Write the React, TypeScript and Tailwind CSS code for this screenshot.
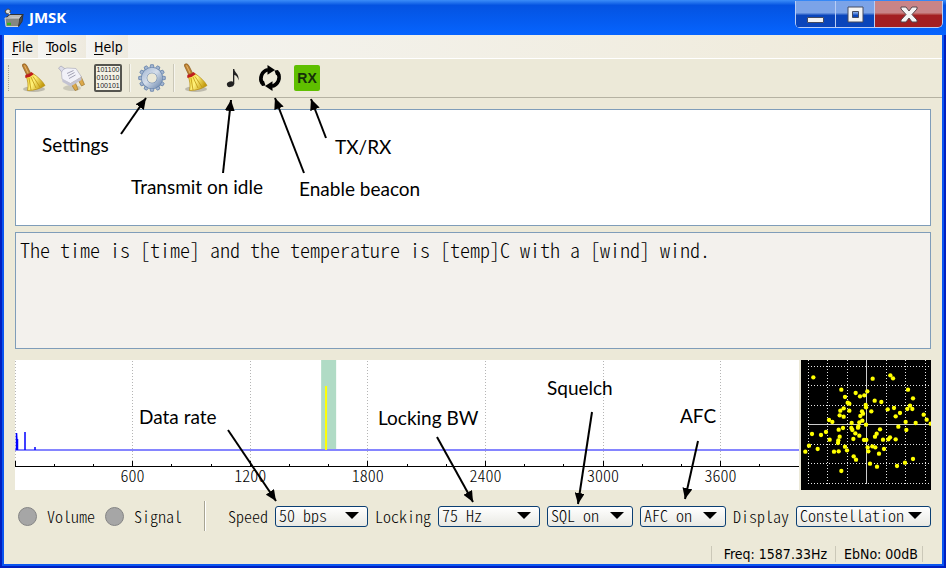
import React from "react";

const MONO = "font-['Noto_Sans_CJK_SC','Liberation_Mono',monospace] font-light [font-feature-settings:'hwid']";
const UI = "font-['DejaVu_Sans_Condensed','Noto_Sans',sans-serif]";

/* Constellation samples, in a 390 x 390 field that starts at (33, 30). */
const SAMPLES: [number, number][] = [
  [70, 82], [248, 86], [301, 76], [309, 85], [154, 119], [354, 119], [197, 129], [232, 124],
  [210, 139], [223, 136], [165, 141], [369, 145], [254, 152], [274, 156], [173, 158], [178, 161],
  [227, 165], [228, 172], [360, 167], [352, 177], [367, 177], [161, 175], [151, 182], [178, 182],
  [293, 178], [312, 174], [244, 184], [216, 184], [219, 191], [330, 189], [317, 199], [149, 196],
  [161, 200], [211, 198], [401, 194], [410, 209], [117, 210], [127, 216], [217, 212], [208, 217],
  [185, 219], [347, 216], [377, 219], [422, 221], [228, 224], [205, 229], [184, 234], [204, 233],
  [187, 240], [159, 234], [146, 239], [325, 230], [349, 240], [270, 238], [108, 246], [66, 252],
  [93, 255], [196, 250], [260, 251], [255, 260], [208, 257], [149, 260], [119, 269], [190, 267],
  [145, 271], [144, 279], [222, 270], [229, 270], [279, 269], [295, 268], [300, 262], [317, 268],
  [57, 287], [83, 297], [46, 305], [165, 290], [171, 301], [132, 305], [146, 304], [233, 292],
  [247, 289], [256, 292], [235, 304], [282, 297], [267, 311], [191, 319], [198, 329], [240, 341],
  [261, 350], [345, 338], [321, 348], [369, 327], [154, 363],
];

function Broom() {
  return (
    <svg viewBox="0 0 28 30" className="h-[30px] w-7" aria-hidden="true">
      <defs>
        <linearGradient id="straw" x1="0" x2="1" y1="0" y2="0.4">
          <stop offset="0" stopColor="#f1d52f" />
          <stop offset="0.5" stopColor="#fff17a" />
          <stop offset="1" stopColor="#c49b0e" />
        </linearGradient>
      </defs>
      <ellipse cx="14" cy="26" rx="11" ry="3" fill="#8d8b82" opacity="0.5" />
      <path d="M2.5 3 Q2 .8 4.2 .8 Q6 .8 7 3 L10.5 10 L6.8 12 Z" fill="#c08434" stroke="#885414" strokeWidth=".7" />
      <path d="M4.5 2.5 L8 10" stroke="#e5b56c" strokeWidth="1" />
      <path d="M6 13 L13 10.5 C18 14 22.5 18 25 22.5 C20 25.5 15 27.5 7.5 27.5 C8.5 22 8 18 6 13Z" fill="url(#straw)" stroke="#b48b0e" strokeWidth=".7" />
      <path d="M9 15 L11 27 M11 14 L16 25 M13 13.5 L20 24" stroke="#bd9412" strokeWidth=".8" fill="none" />
      <path d="M5.3 13.2 Q9 13.5 12.7 10.2" stroke="#c01d1d" strokeWidth="3" fill="none" />
    </svg>
  );
}

function Plug() {
  return (
    <svg viewBox="0 0 28 30" className="h-[30px] w-7" aria-hidden="true">
      <ellipse cx="15" cy="25" rx="9" ry="3" fill="#8d8b82" opacity="0.35" />
      <path d="M13 19 L18 27.500 L21 26.500 L17.500 17.500Z M20 15 L24.500 23 L27.500 21.500 L24 13.500Z" fill="#dda94a" stroke="#9b762f" strokeWidth=".7" />
      <path d="M1.500 5 L4 3 L9 6.500 L5.500 10Z" fill="#dcdce8" stroke="#a5a5b5" strokeWidth=".7" />
      <path d="M4.500 10 Q5 6 10 5 L19 5.500 L24.500 14 L13.500 20.500 L5 16Z" fill="#f1f1f8" stroke="#a5a5b5" strokeWidth=".6" />
      <path d="M5 16 L13.500 20.500 L24.500 14 L24.500 17 L13.500 23.500 L5.500 19Z" fill="#c3c3d2" />
      <path d="M10 10.500 L16.500 7.500 M11 13 L17.500 9.500 M12 15.500 L18.500 12" stroke="#a2a2b4" strokeWidth="1" />
    </svg>
  );
}

function Binary() {
  return (
    <span className="flex size-7 flex-col items-center justify-center rounded-[2px] border-2 border-[#55554f] bg-[#f4f2e6] font-['Liberation_Sans',sans-serif] text-[7px] leading-[8px] text-[#22221e]">
      <span>101100</span>
      <span>010110</span>
      <span>100101</span>
    </span>
  );
}

function Gear() {
  const teeth = Array.from({ length: 12 }, (_, i) => i * 30);
  return (
    <svg viewBox="0 0 28 28" className="size-7" aria-hidden="true">
      <defs>
        <linearGradient id="steel" x1="0" x2="1" y1="0" y2="1">
          <stop offset="0" stopColor="#aebfd8" />
          <stop offset="0.45" stopColor="#d5deea" />
          <stop offset="1" stopColor="#7d96b8" />
        </linearGradient>
      </defs>
      {teeth.map((a) => (
        <path key={a} d="M11.8 4.5 L12.6 .7 H15.4 L16.2 4.5Z" fill="#a4b6d0" stroke="#6582ab" strokeWidth=".8" transform={`rotate(${a} 14 14)`} />
      ))}
      <circle cx="14" cy="14" r="7.8" fill="none" stroke="#6582ab" strokeWidth="6" />
      <circle cx="14" cy="14" r="7.8" fill="none" stroke="url(#steel)" strokeWidth="5" />
    </svg>
  );
}

function Note() {
  return (
    <svg viewBox="0 0 28 28" className="size-7" aria-hidden="true">
      <ellipse cx="11.5" cy="20.2" rx="3.7" ry="2.8" fill="#222" transform="rotate(-18 11.5 20.2)" />
      <path d="M14 20 V5 H15.3 C15.6 9 20.5 10 19.5 16.5 C18.8 13 17.5 11.6 15.3 11 V20Z" fill="#222" />
    </svg>
  );
}

function Cycle() {
  return (
    <svg viewBox="0 0 28 28" className="size-7" aria-hidden="true">
      <path d="M6.4 19.6 A9 9 0 0 1 12 5.8" fill="none" stroke="#000" strokeWidth="3.6" />
      <path d="M11.5 1 L19 6 L11.5 10.8Z" />
      <path d="M21.6 8.4 A9 9 0 0 1 16 22.2" fill="none" stroke="#000" strokeWidth="3.6" />
      <path d="M16.5 17.2 L9 22 L16.5 27Z" />
      <path d="M3.5 17.5 L8 17 L9.5 21.5 L6 22Z M24.5 10.5 L20 11 L18.5 6.5 L22 6Z" />
    </svg>
  );
}

function AppIcon() {
  return (
    <svg viewBox="0 0 20 20" className="size-5" aria-hidden="true">
      <path d="M1 3 L4 .8 L6.5 2.5 L5.5 5.5 L2.5 6Z" fill="#ddd" stroke="#444" />
      <path d="M5 5 L7.5 9" stroke="#eee" strokeWidth="1.5" />
      <path d="M1.500 10 L6 6.500 H19 L15.500 11Z" fill="#b9bab6" stroke="#333" />
      <path d="M1 10 H15.500 L14.500 18.500 H2Z" fill="#858781" stroke="#d5d5d5" />
      <path d="M15.500 11 L19 6.500 L18 13.500 L14.500 18.500Z" fill="#4b4c4a" stroke="#333" />
      <path d="M3 16 h4" stroke="#35b21f" strokeWidth="2.5" />
    </svg>
  );
}

function ToolButton({ label, children }: { label: string; children: React.ReactNode }) {
  return (
    <button type="button" aria-label={label} className="flex size-7 items-center justify-center">
      {children}
    </button>
  );
}

function Separator() {
  return <span className="h-7 w-[2px] border-l border-[#cbc8b8] bg-[#f6f5ee]" />;
}

function MenuItem({ text, className }: { text: string; className: string }) {
  return (
    <button type="button" className={`h-full bg-linear-to-r from-[#f5f5f3] to-[#eeeade] pl-2 text-left ${className}`}>
      <span className="underline underline-offset-2">{text[0]}</span>
      {text.slice(1)}
    </button>
  );
}

function Picker({ id, label, options, className }: { id: string; label?: string; options: string[]; className: string }) {
  return (
    <span className={`relative flex h-[21px] ${className}`}>
      <select
        id={id}
        aria-label={label}
        className={`w-full appearance-none rounded-[3px] border border-[#0b3f73] bg-linear-to-b from-white to-[#e9e9e3] pb-[2px] pl-[3px] leading-[17px] text-black ${MONO}`}
      >
        {options.map((o) => (
          <option key={o}>{o}</option>
        ))}
      </select>
      <svg viewBox="0 0 14 7" className="pointer-events-none absolute top-[6px] right-[9px] h-[7px] w-[14px]" aria-hidden="true">
        <path d="M0 0 H14 L7 7Z" />
      </svg>
    </span>
  );
}

function Lamp() {
  return <span className="size-[19px] shrink-0 rounded-full border border-[#858585] bg-[#a6a6a6]" />;
}

function Spectrum() {
  const pct = (hz: number) => `${hz / 40}%`;
  const minor = Array.from({ length: 21 }, (_, i) => i * 200);
  const major = [0, 600, 1200, 1800, 2400, 3000, 3600];
  return (
    <svg className={`h-[130px] min-w-0 flex-1 bg-white text-base ${MONO}`} role="img" aria-label="Spectrum">
      {major.map((f) => (
        <line key={f} x1={pct(f)} x2={pct(f)} y1="1" y2="101" stroke="#b5b5b5" strokeDasharray="1 2" shapeRendering="crispEdges" />
      ))}
      <rect x={pct(1562)} y="0" width="15" height="90" fill="#b0dbc5" />
      <line x1="0" x2="100%" y1="90" y2="90" stroke="#8585ff" strokeWidth="2" />
      <path d="M1.5 90 V73 L2.5 90 V79 M10 90 V72 M20 90 V87" fill="none" stroke="#00f" strokeWidth="1.5" />
      <line x1={pct(1587)} x2={pct(1587)} y1="26" y2="90" stroke="#ff0" strokeWidth="2" />
      <g stroke="#000" shapeRendering="crispEdges">
        <line x1="0" x2="100%" y1="106.5" y2="106.5" />
        {minor.map((f) => (
          <line key={f} x1={pct(f)} x2={pct(f)} y1={major.includes(f) ? 101 : 104} y2="106" />
        ))}
      </g>
      {major.slice(1).map((f) => (
        <text key={f} x={pct(f)} y="122" textAnchor="middle">
          {f}
        </text>
      ))}
    </svg>
  );
}

function Constellation() {
  return (
    <svg viewBox="33 30 390 390" className="size-[130px] shrink-0 bg-black" role="img" aria-label="Constellation">
      <g stroke="#e8e8e8" strokeWidth="3" strokeDasharray="3 6" shapeRendering="crispEdges">
        {[55, 112, 172, 289, 347, 406].map((x) => (
          <line key={x} x1={x} x2={x} y1="30" y2="402" />
        ))}
        {[49, 106, 166, 283, 340, 400].map((y) => (
          <line key={y} x1="54" x2="423" y1={y} y2={y} />
        ))}
      </g>
      <g stroke="#ccc" strokeWidth="3" shapeRendering="crispEdges">
        <line x1="229" x2="229" y1="30" y2="402" />
        <line x1="54" x2="423" y1="223" y2="223" />
      </g>
      {SAMPLES.map(([x, y]) => (
        <circle key={`${x}-${y}`} cx={x} cy={y} r="6.5" fill="#ff0" />
      ))}
    </svg>
  );
}

const ARROWS = [
  "M121 134 L146 98",
  "M223 173 L231 100",
  "M304 173 L275 98",
  "M326 138 L311 99",
  "M228 430 L276 501",
  "M437 437 L473 502",
  "M592 412 L578 504",
  "M698 441 L685 499",
];

function Callouts() {
  const note = "absolute whitespace-nowrap";
  return (
    <div className="pointer-events-none absolute inset-0 font-['Lato',sans-serif] text-[19px] leading-6 text-black">
      <svg className="absolute inset-0 size-full" aria-hidden="true">
        <defs>
          <marker id="head" viewBox="0 0 11 10" refX="11" refY="5" markerWidth="11" markerHeight="10" markerUnits="userSpaceOnUse" orient="auto">
            <path d="M0 0 L11 5 L0 10Z" />
          </marker>
        </defs>
        {ARROWS.map((d) => (
          <path key={d} d={d} stroke="#000" strokeWidth="2" markerEnd="url(#head)" />
        ))}
      </svg>
      <span className={`${note} top-[133px] left-[42px]`}>Settings</span>
      <span className={`${note} top-[175px] left-[131px]`}>Transmit on idle</span>
      <span className={`${note} top-[177px] left-[299px]`}>Enable beacon</span>
      <span className={`${note} top-[135px] left-[335px]`}>TX/RX</span>
      <span className={`${note} top-[405px] left-[139px]`}>Data rate</span>
      <span className={`${note} top-[406px] left-[378px]`}>Locking BW</span>
      <span className={`${note} top-[376px] left-[547px]`}>Squelch</span>
      <span className={`${note} top-[404px] left-[680px]`}>AFC</span>
    </div>
  );
}

function TitleBar() {
  const glass = "flex h-[27px] items-center justify-center border-r border-b border-[#b9cdf5]";
  return (
    <header className="flex h-[35px] items-start bg-linear-to-b from-[#3b8df8] via-[#0453e1] via-15% to-[#0664ff] pl-1">
      <div className="flex h-full flex-1 items-center gap-[5px]">
        <AppIcon />
        <h1 className="font-['Open_Sans',sans-serif] text-[15px] font-bold text-white">JMSK</h1>
      </div>
      <div className="mt-px mr-[3px] flex overflow-hidden rounded-b-[5px] border-l border-[#b9cdf5]">
        <button type="button" aria-label="Minimize" className={`${glass} w-10 bg-linear-to-b from-[#7ba3e8] from-45% to-[#0a45bb] to-55%`}>
          <span className="mt-3 h-[6px] w-[17px] rounded-[1px] border border-[#444b60] bg-[#f4f4f4]" />
        </button>
        <button type="button" aria-label="Maximize" className={`${glass} w-[39px] bg-linear-to-b from-[#7ba3e8] from-45% to-[#0a45bb] to-55%`}>
          <svg viewBox="0 0 17 17" className="size-[17px]" aria-hidden="true">
            <path d="M1 1H16V16H1Z M5.500 5.500V11.500H11.500V5.500Z" fillRule="evenodd" fill="#f4f4f4" stroke="#444b60" />
          </svg>
        </button>
        <button type="button" aria-label="Close" className={`${glass} w-[68px] rounded-br-[5px] bg-linear-to-b from-[#c98487] from-45% to-[#a31f22] to-55%`}>
          <svg viewBox="0 0 18 17" className="h-[17px] w-[18px]" aria-hidden="true">
            <path d="M1 1H6L9 5L12 1H17V3L12 8.500L17 14V16H12L9 12L6 16H1V14L6 8.500L1 3Z" fill="#f4f4f4" stroke="#58464c" />
          </svg>
        </button>
      </div>
    </header>
  );
}

export default function App() {
  return (
    <div className="relative w-full">
      <TitleBar />
      <div className="border-x-2 border-b-2 border-[#001fc0]">
        <div className="border-x-2 border-b-2 border-[#0a55f0] bg-[#ece9d8]">
          <nav className={`flex h-6 items-stretch border-b border-white bg-linear-to-r from-[#f5f5f3] to-[#efead9] text-sm text-black ${UI}`}>
            <MenuItem text="File" className="w-[34px]" />
            <MenuItem text="Tools" className="w-12" />
            <MenuItem text="Help" className="w-[42px]" />
          </nav>

          <div className="flex h-[39px] items-center gap-[7px] border-b border-[#b5b2a2] pl-1">
            <span className="h-[26px] w-[5px] border-l border-dotted border-[#a5a290]" />
            <div className="flex gap-[9px]">
              <ToolButton label="Clear received text"><Broom /></ToolButton>
              <ToolButton label="Connect"><Plug /></ToolButton>
              <ToolButton label="Raw bits"><Binary /></ToolButton>
            </div>
            <Separator />
            <ToolButton label="Settings"><Gear /></ToolButton>
            <Separator />
            <div className="flex gap-[9px]">
              <ToolButton label="Clear transmit text"><Broom /></ToolButton>
              <ToolButton label="Transmit on idle"><Note /></ToolButton>
              <ToolButton label="Enable beacon"><Cycle /></ToolButton>
              <ToolButton label="TX/RX">
                <span className="flex size-[26px] items-center justify-center rounded-[2px] bg-[#5fbf00] font-['Liberation_Sans',sans-serif] text-sm font-bold text-[#16300a]">
                  RX
                </span>
              </ToolButton>
            </div>
          </div>

          <main className="flex flex-col px-[11px] pt-[11px]">
            <textarea aria-label="Received text" className="mb-[6px] block h-[117px] resize-none border border-[#7f9db9] bg-white p-1" />
            <textarea
              aria-label="Text to transmit"
              className={`block h-[117px] resize-none border border-[#7f9db9] bg-[#f3f1ed] px-1 py-[5px] text-[20px] leading-6 text-black ${MONO}`}
              defaultValue="The time is [time] and the temperature is [temp]C with a [wind] wind."
            />
            <div className="mt-[11px] flex gap-[2px]">
              <Spectrum />
              <Constellation />
            </div>

            <div className={`mt-[11px] flex h-[30px] items-center text-base text-black ${MONO}`}>
              <div className="flex items-center gap-[10px] pl-[3px]">
                <Lamp />
                <span className="w-12">Volume</span>
                <Lamp />
                <span className="w-12">Signal</span>
              </div>
              <span className="mr-[22px] ml-[22px] h-full w-[2px] border-l border-[#a7a493] bg-white" />
              <div className="flex flex-1 items-center gap-[7px]">
                <label htmlFor="speed" className="w-10">Speed</label>
                <Picker id="speed" options={["50 bps", "125 bps", "250 bps"]} className="w-[93px]" />
                <label htmlFor="locking" className="w-14">Locking</label>
                <Picker id="locking" options={["75 Hz", "150 Hz", "300 Hz"]} className="w-[102px]" />
                <Picker id="squelch" label="Squelch" options={["SQL on", "SQL off"]} className="w-[86px]" />
                <Picker id="afc" label="AFC" options={["AFC on", "AFC off"]} className="w-[86px]" />
                <label htmlFor="display" className="w-14">Display</label>
                <Picker id="display" options={["Constellation", "Symbol phase"]} className="flex-1" />
              </div>
            </div>
          </main>

          <footer className={`flex h-[33px] items-end justify-end pr-[19px] pb-[2px] text-sm text-black ${UI}`}>
            <span className="border-l border-[#cbc8b8] pr-2 pl-3 leading-4">Freq: 1587.33Hz</span>
            <span className="border-x border-[#cbc8b8] pr-1 pl-2 leading-4">EbNo: 00dB</span>
          </footer>
        </div>
      </div>
      <Callouts />
    </div>
  );
}
